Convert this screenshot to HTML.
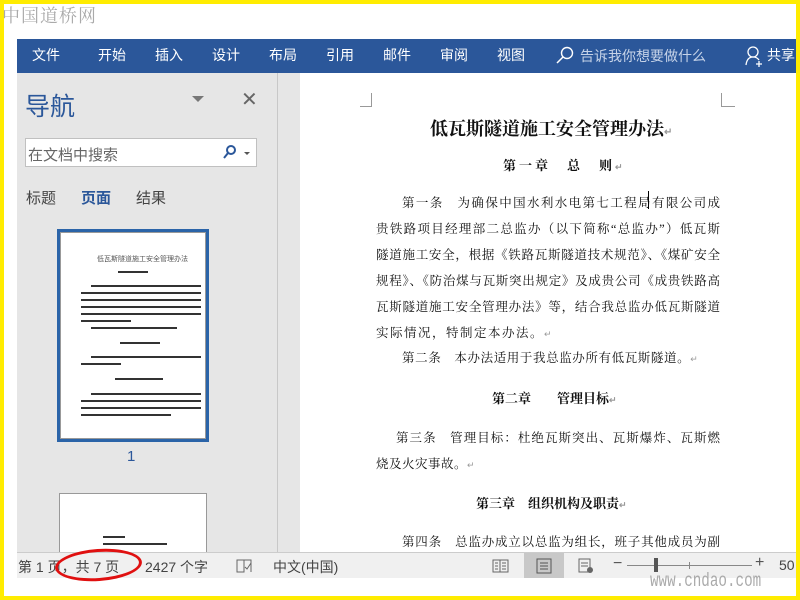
<!DOCTYPE html>
<html><head><meta charset="utf-8"><style>
*{margin:0;padding:0;box-sizing:border-box}
body{width:800px;height:600px;background:#ffec00;position:relative;overflow:hidden;font-family:"Liberation Sans","Noto Sans CJK SC",sans-serif}
.a{position:absolute;white-space:nowrap}
#in{position:absolute;left:4px;top:4px;width:792px;height:592px;background:#fff}
.rb{position:absolute;left:17px;top:39px;width:779px;height:34px;background:#2b579a;color:#fff;font-size:14px}
.nav{position:absolute;left:17px;top:73px;width:260px;height:479px;background:#e6e6e6}
.gut{position:absolute;left:277px;top:73px;width:23px;height:479px;background:#e6e6e6;border-left:1px solid #c8c8c8}
.page{position:absolute;left:300px;top:73px;width:496px;height:479px;background:#fff}
.sb{position:absolute;left:17px;top:552px;width:779px;height:26px;background:#f0f0f0;border-top:1px solid #ccc;font-size:14px;color:#444}
.doc{font-family:"Liberation Serif","Noto Serif CJK SC",serif;color:#111;font-size:12.5px}
.j{text-align:justify;text-align-last:justify}
.tl{position:absolute;height:2px;background:#333}
</style></head><body>
<div id="in"></div>
<div class="a" style="left:2px;top:2px;font-size:18px;color:#aaa;font-family:'Noto Serif CJK SC',serif;letter-spacing:1px">中国道桥网</div>
<div class="rb">
<span class="a" style="left:15px;top:6px">文件</span>
<span class="a" style="left:81px;top:6px">开始</span>
<span class="a" style="left:138px;top:6px">插入</span>
<span class="a" style="left:195px;top:6px">设计</span>
<span class="a" style="left:252px;top:6px">布局</span>
<span class="a" style="left:309px;top:6px">引用</span>
<span class="a" style="left:366px;top:6px">邮件</span>
<span class="a" style="left:423px;top:6px">审阅</span>
<span class="a" style="left:480px;top:6px">视图</span>
<svg class="a" style="left:538px;top:6px" width="20" height="20"><circle cx="12" cy="8" r="5.5" fill="none" stroke="#fff" stroke-width="1.4"/><line x1="8" y1="12" x2="2" y2="18" stroke="#fff" stroke-width="1.5"/></svg>
<span class="a" style="left:563px;top:7px;color:#c6d3e8">告诉我你想要做什么</span>
<svg class="a" style="left:727px;top:6px" width="20" height="22"><circle cx="9" cy="7" r="5" fill="none" stroke="#fff" stroke-width="1.3"/><path d="M2 20 Q3 12 9 12 Q13 12 15 15" fill="none" stroke="#fff" stroke-width="1.3"/><path d="M15 16v6M12 19h6" stroke="#fff" stroke-width="1.3"/></svg>
<span class="a" style="left:750px;top:6px">共享</span>
</div>
<div class="nav">
<span class="a" style="left:8px;top:14px;font-size:25px;color:#2b579a">导航</span>
<span class="a" style="left:175px;top:23px;width:0;height:0;border-left:6px solid transparent;border-right:6px solid transparent;border-top:6px solid #777"></span>
<span class="a" style="left:224px;top:14px;font-size:20px;color:#666">✕</span>
<div class="a" style="left:8px;top:65px;width:232px;height:29px;background:#fff;border:1px solid #c0c0c0"></div>
<span class="a" style="left:11px;top:71px;font-size:15px;color:#666">在文档中搜索</span>
<svg class="a" style="left:205px;top:71px" width="16" height="16"><circle cx="9" cy="6" r="4" fill="none" stroke="#2b579a" stroke-width="2"/><line x1="6" y1="9" x2="2" y2="14" stroke="#2b579a" stroke-width="2"/></svg>
<span class="a" style="left:227px;top:79px;width:0;height:0;border-left:3px solid transparent;border-right:3px solid transparent;border-top:3px solid #555"></span>
<span class="a" style="left:9px;top:114px;font-size:15px;color:#444">标题</span>
<span class="a" style="left:64px;top:114px;font-size:15px;color:#2b579a;font-weight:bold">页面</span>
<span class="a" style="left:119px;top:114px;font-size:15px;color:#444">结果</span>
<div class="a" style="left:40px;top:156px;width:152px;height:213px;background:#fff;border:3px solid #2b64a8"></div>
<div class="a" style="left:43px;top:159px;width:146px;height:207px;border:1px solid #999"></div>
<span class="a" style="left:80px;top:181px;font-size:7px;color:#555">低瓦斯隧道施工安全管理办法</span>
<div class="tl" style="left:101px;top:198px;width:30px"></div>
<div class="tl" style="left:74px;top:212px;width:110px"></div>
<div class="tl" style="left:64px;top:219px;width:120px"></div>
<div class="tl" style="left:64px;top:226px;width:120px"></div>
<div class="tl" style="left:64px;top:233px;width:120px"></div>
<div class="tl" style="left:64px;top:240px;width:120px"></div>
<div class="tl" style="left:64px;top:247px;width:50px"></div>
<div class="tl" style="left:74px;top:254px;width:86px"></div>
<div class="tl" style="left:103px;top:269px;width:40px"></div>
<div class="tl" style="left:74px;top:283px;width:110px"></div>
<div class="tl" style="left:64px;top:290px;width:40px"></div>
<div class="tl" style="left:98px;top:305px;width:48px"></div>
<div class="tl" style="left:74px;top:320px;width:110px"></div>
<div class="tl" style="left:64px;top:327px;width:120px"></div>
<div class="tl" style="left:64px;top:334px;width:120px"></div>
<div class="tl" style="left:64px;top:341px;width:90px"></div>
<span class="a" style="left:110px;top:375px;font-size:15px;color:#2b579a">1</span>
<div class="a" style="left:42px;top:420px;width:148px;height:59px;background:#fff;border:1px solid #999;border-bottom:0"></div>
<div class="tl" style="left:86px;top:463px;width:22px"></div>
<div class="tl" style="left:86px;top:470px;width:64px"></div>
</div>
<div class="gut"></div>
<div class="page doc">
<div class="a" style="left:60px;top:20px;width:12px;height:14px;border-right:1px solid #999;border-bottom:1px solid #999"></div>
<div class="a" style="left:421px;top:20px;width:14px;height:14px;border-left:1px solid #999;border-bottom:1px solid #999"></div>
<div class="a" style="left:130px;top:42px;font-size:18px;font-weight:bold">低瓦斯隧道施工安全管理办法<span style="font-size:10px;color:#999">↵</span></div>
<div class="a" style="left:203px;top:82px;font-size:13px;font-weight:bold;letter-spacing:3px">第一章　总　则<span style="font-size:9px;color:#999">↵</span></div>
<div class="a j" style="left:102px;top:120px;width:318px">第一条　为确保中国水利水电第七工程局有限公司成</div>
<div class="a" style="left:348px;top:118px;width:1px;height:18px;background:#000"></div>
<div class="a j" style="left:76px;top:146px;width:344px">贵铁路项目经理部二总监办（以下简称“总监办”）低瓦斯</div>
<div class="a j" style="left:76px;top:172px;width:344px">隧道施工安全，根据《铁路瓦斯隧道技术规范》、《煤矿安全</div>
<div class="a j" style="left:76px;top:198px;width:344px">规程》、《防治煤与瓦斯突出规定》及成贵公司《成贵铁路高</div>
<div class="a j" style="left:76px;top:224px;width:344px">瓦斯隧道施工安全管理办法》等，结合我总监办低瓦斯隧道</div>
<div class="a" style="left:76px;top:250px;letter-spacing:1.5px">实际情况，特制定本办法。<span style="font-size:9px;color:#999">↵</span></div>
<div class="a" style="left:102px;top:275px;letter-spacing:0.6px">第二条　本办法适用于我总监办所有低瓦斯隧道。<span style="font-size:9px;color:#999">↵</span></div>
<div class="a" style="left:192px;top:315px;font-size:13px;font-weight:bold">第二章　　管理目标<span style="font-size:9px;color:#999">↵</span></div>
<div class="a j" style="left:96px;top:355px;width:324px">第三条　管理目标：杜绝瓦斯突出、瓦斯爆炸、瓦斯燃</div>
<div class="a" style="left:76px;top:381px;letter-spacing:0.5px">烧及火灾事故。<span style="font-size:9px;color:#999">↵</span></div>
<div class="a" style="left:176px;top:420px;font-size:13px;font-weight:bold">第三章　组织机构及职责<span style="font-size:9px;color:#999">↵</span></div>
<div class="a j" style="left:102px;top:459px;width:318px">第四条　总监办成立以总监为组长，班子其他成员为副</div>
</div>
<div class="sb">
<span class="a" style="left:1px;top:4px">第 1 页，共 7 页</span>
<span class="a" style="left:128px;top:4px">2427 个字</span>
<svg class="a" style="left:219px;top:5px" width="18" height="16"><path d="M1 2h7v12H1zM8 2h7v12" fill="none" stroke="#666"/><path d="M9 9l2 2 4-6" fill="none" stroke="#666"/></svg>
<span class="a" style="left:256px;top:4px">中文(中国)</span>
<svg class="a" style="left:475px;top:5px" width="18" height="16"><path d="M1 2h7v12H1zM8 2h8v12H8" fill="none" stroke="#666"/><path d="M3 5h3M3 8h3M3 11h3M10 5h4M10 8h4M10 11h4" stroke="#666"/></svg>
<div class="a" style="left:507px;top:0;width:40px;height:25px;background:#c8c8c8"></div>
<svg class="a" style="left:519px;top:5px" width="16" height="16"><rect x="1" y="1" width="14" height="14" fill="none" stroke="#555"/><path d="M4 5h8M4 8h8M4 11h8" stroke="#555"/></svg>
<svg class="a" style="left:561px;top:5px" width="16" height="16"><rect x="1" y="1" width="11" height="13" fill="none" stroke="#666"/><path d="M3 5h7M3 8h7" stroke="#666"/><circle cx="12" cy="12" r="3" fill="#666"/></svg>
<span class="a" style="left:596px;top:2px;font-size:16px;color:#555">−</span>
<div class="a" style="left:610px;top:12px;width:125px;height:1px;background:#888"></div>
<div class="a" style="left:637px;top:5px;width:4px;height:14px;background:#555"></div>
<div class="a" style="left:672px;top:9px;width:1px;height:7px;background:#888"></div>
<span class="a" style="left:738px;top:1px;font-size:16px;color:#555">+</span>
<span class="a" style="left:762px;top:4px">50</span>
</div>
<div class="a" style="left:55px;top:549px;width:87px;height:32px;border:3px solid #e01010;border-radius:50%;transform:rotate(-4deg)"></div>
<span class="a" style="left:650px;top:570px;font-size:19px;color:#aaa;font-family:'Liberation Mono',monospace;transform:scaleX(0.75);transform-origin:left">www.cndao.com</span>
</body></html>
